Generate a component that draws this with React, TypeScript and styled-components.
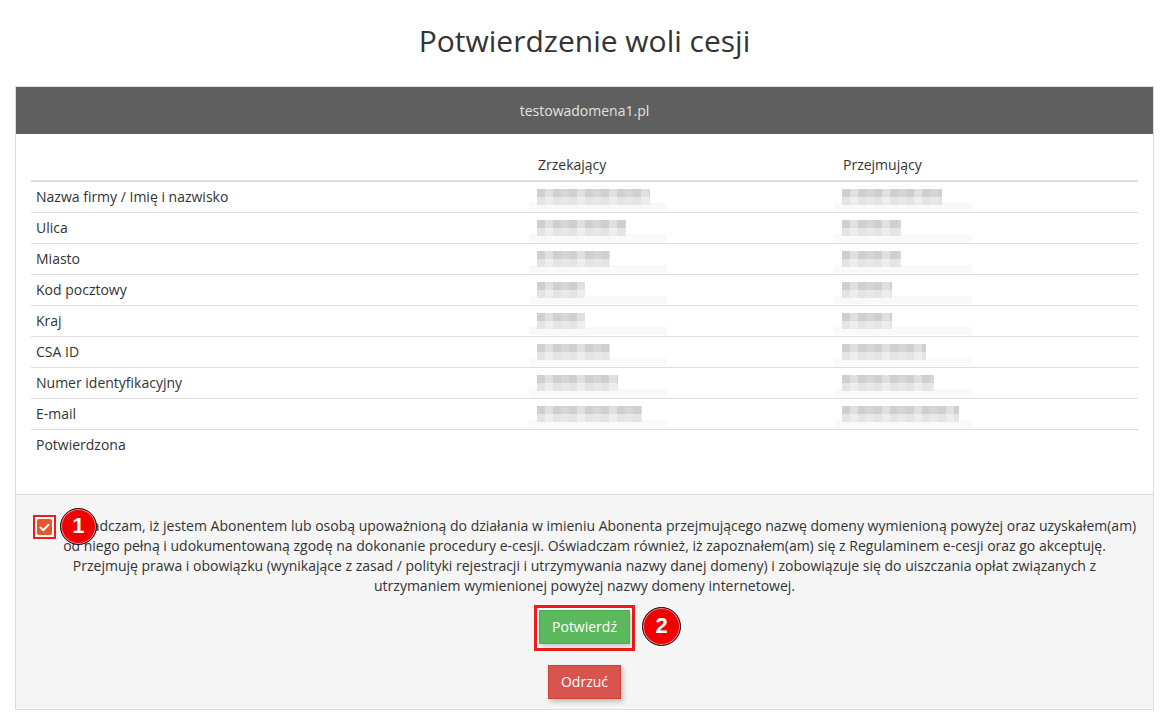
import React from "react";
import styled, { createGlobalStyle } from "styled-components";

const Global = createGlobalStyle`
  html, body { margin: 0; padding: 0; background: #fff; }
  body {
    font-family: "Open Sans", "Noto Sans", sans-serif;
    font-size: 14px;
    line-height: 20px;
    color: #333;
  }
  * { box-sizing: border-box; }
`;

const Page = styled.div`
  padding: 0 15px;
`;

const Title = styled.h1`
  margin: 24px 0 29px;
  font-size: 30px;
  line-height: 33px;
  font-weight: 400;
  text-align: center;
  color: #333;
`;

const Panel = styled.div`
  border: 1px solid #ddd;
  background: #fff;
`;

const PanelHeader = styled.div`
  background: #5f5f5f;
  color: #e2e2e2;
  text-align: center;
  padding: 14px 15px 13px;
  line-height: 20px;
`;

const PanelBody = styled.div`
  padding: 16px 15px 15px;
`;

const Table = styled.table`
  width: 100%;
  border-collapse: collapse;
  margin-bottom: 19px;
`;

const Th = styled.th<{ $w?: string }>`
  text-align: left;
  font-weight: 400;
  padding: 5px;
  line-height: 20px;
  border-bottom: 2px solid #ddd;
  width: ${(p) => p.$w || "auto"};
`;

const Tr = styled.tr`
  & + & td { border-top: 1px solid #ddd; }
`;

const Td = styled.td`
  padding: 5px;
  line-height: 20px;
  vertical-align: top;
`;

const BlurCell = styled.div<{ $strip: number }>`
  position: relative;
  height: 20px;
  margin-left: -1px;
  width: ${(p) => p.$strip}px;
  &::after {
    content: "";
    position: absolute;
    left: -8px;
    right: 0;
    top: 16px;
    height: 8px;
    background: #f9f9f9;
  }
`;

const BlurBits = styled.div<{ $w: number }>`
  position: relative;
  top: 2px;
  height: 16px;
  width: ${(p) => p.$w}px;
  background:
    repeating-linear-gradient(90deg, rgba(255,255,255,0) 0 8px, rgba(255,255,255,0.35) 8px 16px, rgba(255,255,255,0) 16px 24px, rgba(255,255,255,0.15) 24px 32px),
    linear-gradient(180deg, #cfcfcf 0 50%, #e4e4e4 50% 100%);
  filter: blur(0.4px);
  z-index: 1;
`;

const PanelFooter = styled.div`
  background: #f5f5f5;
  border-top: 1px solid #ddd;
  padding: 10px 15px;
  text-align: center;
`;

const Statement = styled.p`
  margin: 11px 0 0;
  line-height: 20px;
  color: #333;
`;

const CheckWrap = styled.span`
  position: relative;
  display: inline-block;
  vertical-align: middle;
  border: 2px solid #f21b1b;
  padding: 2px;
  margin: -5px 4px -5px 0;
  background: #fff;
  line-height: 0;
`;

const CheckBox = styled.span`
  display: flex;
  align-items: center;
  justify-content: center;
  width: 15px;
  height: 16px;
  border-radius: 2px;
  background: #e8572a;
`;

const Marker = styled.span<{ $size: number }>`
  position: absolute;
  width: ${(p) => p.$size}px;
  height: ${(p) => p.$size}px;
  border-radius: 50%;
  background: #f00000;
  border: 1.5px solid #111;
  box-shadow: inset 0 0 0 1px rgba(255,255,255,0.55);
  color: #fff;
  font-family: "Liberation Sans", Arial, sans-serif;
  font-weight: 700;
  font-size: 22px;
  line-height: ${(p) => p.$size - 3}px;
  text-align: center;
  z-index: 2;
`;

const Marker1 = styled(Marker)`
  left: 25px;
  top: -9px;
`;

const Marker2 = styled(Marker)`
  left: 105px;
  top: -1px;
`;

const Actions = styled.div`
  display: flex;
  flex-direction: column;
  align-items: center;
  gap: 14px;
  margin-top: 9px;
`;

const Highlight = styled.div`
  position: relative;
  border: 3px solid #f21b1b;
  padding: 2px 2px 4px;
  background: #fff;
  line-height: 0;
`;

const Button = styled.button<{ $variant: "success" | "danger" }>`
  font-family: "Open Sans", "Noto Sans", sans-serif;
  font-size: 14px;
  line-height: 20px;
  padding: 6px 12px;
  border: 1px solid ${(p) => (p.$variant === "success" ? "#4cae4c" : "#d43f3a")};
  background: ${(p) => (p.$variant === "success" ? "#5cb85c" : "#d9534f")};
  color: #fff;
  border-radius: 0;
  box-shadow: 2px 3px 5px rgba(0, 0, 0, 0.22);
  cursor: pointer;
`;

type Row = { label: string; a: number; b: number };

const rows: Row[] = [
  { label: "Nazwa firmy / Imię i nazwisko", a: 113, b: 100 },
  { label: "Ulica", a: 89, b: 59 },
  { label: "Miasto", a: 73, b: 59 },
  { label: "Kod pocztowy", a: 48, b: 50 },
  { label: "Kraj", a: 48, b: 50 },
  { label: "CSA ID", a: 73, b: 84 },
  { label: "Numer identyfikacyjny", a: 81, b: 92 },
  { label: "E-mail", a: 105, b: 117 },
];

export default function App() {
  return (
    <>
      <Global />
      <Page>
        <Title>Potwierdzenie woli cesji</Title>
        <Panel>
          <PanelHeader>testowadomena1.pl</PanelHeader>
          <PanelBody>
            <Table>
              <thead>
                <tr>
                  <Th $w="502px"></Th>
                  <Th $w="305px">Zrzekający</Th>
                  <Th>Przejmujący</Th>
                </tr>
              </thead>
              <tbody>
                {rows.map((r) => (
                  <Tr key={r.label}>
                    <Td>{r.label}</Td>
                    <Td>
                      <BlurCell $strip={130}>
                        <BlurBits $w={r.a} />
                      </BlurCell>
                    </Td>
                    <Td>
                      <BlurCell $strip={130}>
                        <BlurBits $w={r.b} />
                      </BlurCell>
                    </Td>
                  </Tr>
                ))}
                <Tr>
                  <Td>Potwierdzona</Td>
                  <Td></Td>
                  <Td></Td>
                </Tr>
              </tbody>
            </Table>
          </PanelBody>
          <PanelFooter>
            <Statement>
              <CheckWrap>
                <CheckBox>
                  <svg width="11" height="9" viewBox="0 0 11 9">
                    <path d="M1.5 4.6 L4.2 7.2 L9.5 1.8" fill="none" stroke="#fff" strokeWidth="2" strokeLinecap="round" strokeLinejoin="round" />
                  </svg>
                </CheckBox>
                <Marker1 $size={37}>1</Marker1>
              </CheckWrap>
              Oświadczam, iż jestem Abonentem lub osobą upoważnioną do działania w imieniu Abonenta przejmującego nazwę domeny wymienioną powyżej oraz uzyskałem(am)
              <br />
              od niego pełną i udokumentowaną zgodę na dokonanie procedury e-cesji. Oświadczam również, iż zapoznałem(am) się z Regulaminem e-cesji oraz go akceptuję.
              <br />
              Przejmuję prawa i obowiązku (wynikające z zasad / polityki rejestracji i utrzymywania nazwy danej domeny) i zobowiązuje się do uiszczania opłat związanych z
              <br />
              utrzymaniem wymienionej powyżej nazwy domeny internetowej.
            </Statement>
            <Actions>
              <Highlight>
                <Button $variant="success">Potwierdź</Button>
                <Marker2 $size={39}>2</Marker2>
              </Highlight>
              <Button $variant="danger">Odrzuć</Button>
            </Actions>
          </PanelFooter>
        </Panel>
      </Page>
    </>
  );
}
